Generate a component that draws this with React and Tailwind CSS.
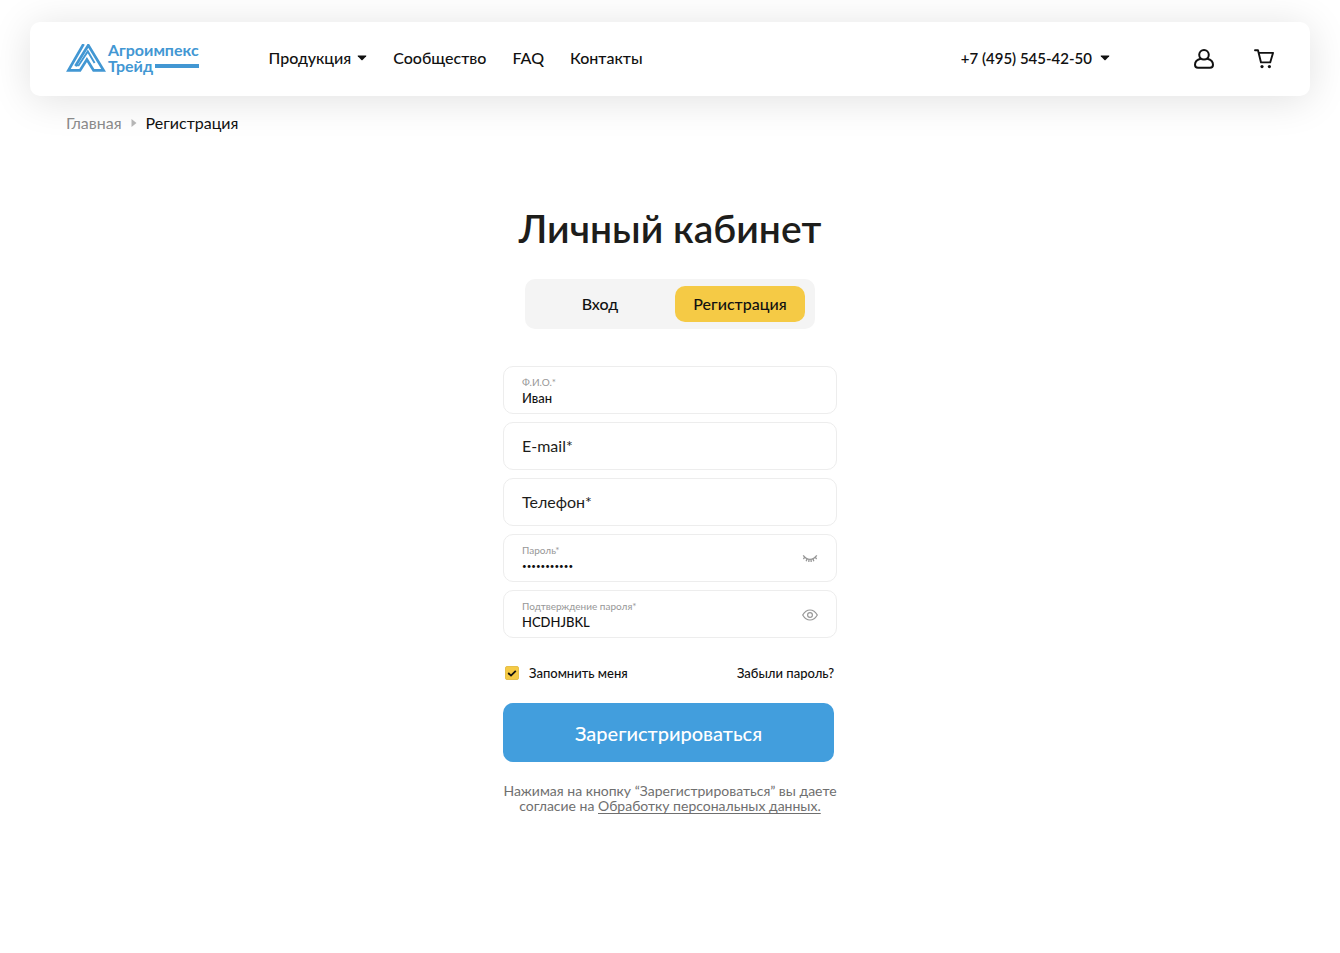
import React, { useState } from "react";

const fields = [
  { id: "name", label: "Ф.И.О.*", type: "text" },
  { id: "email", label: "E-mail*", type: "email" },
  { id: "phone", label: "Телефон*", type: "tel" },
  { id: "password", label: "Пароль*", type: "password" },
  { id: "confirm", label: "Подтверждение пароля*", type: "password" },
];

function Logo() {
  return (
    <a href="#" className="flex items-center gap-[2px] pb-[2px] text-[#4297d3]">
      <svg width="40" height="28" viewBox="0 0 40 28" fill="none" stroke="currentColor" strokeWidth="2.7">
        <path d="M17.6 0 L2.4 26.4 H14 L20.9 15.5 L27.6 26.4 H37.6 L22.3 1.2 L9.4 22" />
        <path d="M9.4 21.4 H12.6 L21.8 7.4 L28.6 19" strokeWidth="1.9" />
      </svg>
      <span className="flex flex-col text-[16px] leading-4 font-bold">
        <span>Агроимпекс</span>
        <span className="flex items-center gap-[2px]">
          Трейд
          <span className="h-1 flex-1 bg-[#4297d3]" />
        </span>
      </span>
    </a>
  );
}

function Caret() {
  return (
    <svg width="10" height="6" viewBox="0 0 10 6" fill="currentColor">
      <path d="M1 0.5 H9 Q9.6 0.7 9.2 1.2 L5.6 5 Q5 5.6 4.4 5 L0.8 1.2 Q0.4 0.7 1 0.5 Z" />
    </svg>
  );
}

function UserIcon() {
  return (
    <svg width="20" height="20" viewBox="0 0 20 20" fill="none" stroke="currentColor" strokeWidth="2">
      <circle cx="10" cy="5.8" r="4.8" />
      <path d="M6.8 9.8 C3.4 10.6 1 12.9 1 15.8 C1 17.8 2 18.8 4 18.8 H16 C18 18.8 19 17.8 19 15.8 C19 12.9 16.6 10.6 13.2 9.8" />
    </svg>
  );
}

function CartIcon() {
  return (
    <svg width="20" height="20" viewBox="0 0 20 20" fill="none" stroke="currentColor" strokeWidth="1.9">
      <path d="M1 1.2 H4 L7 13.4 H16.2 L19 3.9 H4.8" strokeLinejoin="round" strokeLinecap="round" />
      <circle cx="8" cy="17.6" r="1.6" fill="currentColor" stroke="none" />
      <circle cx="15.4" cy="17.6" r="1.6" fill="currentColor" stroke="none" />
    </svg>
  );
}

function EyeIcon({ open }) {
  if (open) {
    return (
      <svg width="16" height="12" viewBox="0 0 16 12" fill="none" stroke="currentColor" strokeWidth="1.2">
        <path d="M0.7 6 C2.6 2.7 5.1 1 8 1 C10.9 1 13.4 2.7 15.3 6 C13.4 9.3 10.9 11 8 11 C5.1 11 2.6 9.3 0.7 6 Z" />
        <circle cx="8" cy="6" r="2.4" />
      </svg>
    );
  }
  return (
    <svg width="16" height="12" viewBox="0 0 16 12" fill="none" stroke="currentColor" strokeWidth="1.3">
      <path d="M1.2 2.4 C3.2 5.2 5.4 6.3 8 6.3 C10.6 6.3 12.8 5.2 14.8 2.4" />
      <path d="M2.8 4.2 L1.4 6 M5 5.8 L4.2 8.2 M7 6.4 L6.8 9 M9 6.4 L9.2 9 M11 5.8 L11.8 8.2 M13.2 4.2 L14.6 6" />
    </svg>
  );
}

function Field({ field, value, visible, onChange, onToggle }) {
  const isPassword = field.type === "password";
  const masked = isPassword && !visible;
  return (
    <div className="relative flex h-12 items-center rounded-[10px] border border-[#ededed] px-[18px] pt-[3px]">
      <div className="flex min-w-0 flex-1 flex-col">
        <label
          htmlFor={field.id}
          className={
            value
              ? "text-[10px] leading-3 text-[#979797]"
              : "pointer-events-none absolute inset-y-0 flex items-center text-[16px] text-[#1d1d1b]"
          }
        >
          {field.label}
        </label>
        <input
          id={field.id}
          type={isPassword && visible ? "text" : field.type}
          value={value}
          onChange={(e) => onChange(field.id, e.target.value)}
          className={
            masked
              ? "h-5 w-full bg-transparent text-[8px] text-[#111111] outline-none"
              : "h-5 w-full bg-transparent text-[13px] font-medium text-[#111111] outline-none"
          }
        />
      </div>
      {isPassword && (
        <button
          type="button"
          aria-label={visible ? "Скрыть пароль" : "Показать пароль"}
          onClick={() => onToggle(field.id)}
          className="pb-[2px] text-[#979797]"
        >
          <EyeIcon open={visible} />
        </button>
      )}
    </div>
  );
}

function App() {
  const [tab, setTab] = useState("register");
  const [remember, setRemember] = useState(true);
  const [visible, setVisible] = useState({ password: false, confirm: true });
  const [values, setValues] = useState({
    name: "Иван",
    email: "",
    phone: "",
    password: "qwerty12345",
    confirm: "HCDHJBKL",
  });

  const handleChange = (id, value) => setValues({ ...values, [id]: value });
  const handleToggle = (id) => setVisible({ ...visible, [id]: !visible[id] });

  const tabClass = (name) =>
    name === tab
      ? "h-9 w-[130px] rounded-[10px] bg-[#f5ca45]"
      : "h-9 w-[130px] rounded-[10px]";

  return (
    <div className="min-h-screen bg-white px-[30px] pt-[22px] pb-10 font-['Lato','Noto_Sans',sans-serif] text-[#111111]">
      <header className="flex h-[74px] items-center rounded-[10px] bg-white px-9 shadow-[0_4px_40px_rgba(0,0,0,0.12)]">
        <Logo />
        <nav className="ml-[70px] flex items-center gap-[26px] pb-[2px] text-[16px] font-medium">
          <button type="button" className="flex items-center gap-[6px]">
            Продукция
            <Caret />
          </button>
          <a href="#">Сообщество</a>
          <a href="#">FAQ</a>
          <a href="#">Контакты</a>
        </nav>
        <button
          type="button"
          className="mr-[84px] ml-auto flex items-center gap-2 pb-[2px] text-[15px] font-semibold"
        >
          +7 (495) 545-42-50
          <Caret />
        </button>
        <div className="flex items-center gap-10">
          <a href="#" aria-label="Профиль">
            <UserIcon />
          </a>
          <a href="#" aria-label="Корзина">
            <CartIcon />
          </a>
        </div>
      </header>

      <div className="mt-[15px] flex items-center gap-[9px] px-9 text-[16px] leading-6">
        <a href="#" className="text-[#8a8a8a]">
          Главная
        </a>
        <svg width="6" height="8" viewBox="0 0 6 8" className="text-[#b5b5b5]" fill="currentColor">
          <path d="M0.5 0 L5.5 4 L0.5 8 Z" />
        </svg>
        <span>Регистрация</span>
      </div>

      <main className="mx-auto mt-[69px] flex max-w-[334px] flex-col items-center">
        <h1 className="text-[39px] leading-[48px] font-semibold whitespace-nowrap text-[#1d1d1b]">Личный кабинет</h1>

        <div className="mt-[27px] flex h-[50px] w-[290px] items-center justify-between rounded-[10px] bg-[#f4f4f4] px-[10px] text-[16px] font-medium">
          <button type="button" className={tabClass("login")} onClick={() => setTab("login")}>
            Вход
          </button>
          <button type="button" className={tabClass("register")} onClick={() => setTab("register")}>
            Регистрация
          </button>
        </div>

        <form className="mt-[37px] w-full" onSubmit={(e) => e.preventDefault()}>
          <div className="flex flex-col gap-2">
            {fields.map((field) => (
              <Field
                key={field.id}
                field={field}
                value={values[field.id]}
                visible={visible[field.id]}
                onChange={handleChange}
                onToggle={handleToggle}
              />
            ))}
          </div>

          <div className="mt-[25px] flex items-center justify-between pr-[3px] pl-[2px] text-[13px] leading-5 font-medium">
            <label className="flex items-center gap-[10px]">
              <span className="relative flex">
                <input
                  type="checkbox"
                  checked={remember}
                  onChange={(e) => setRemember(e.target.checked)}
                  className="peer size-[14px] appearance-none rounded-[2px] border border-[#e6c04a] checked:bg-[#f5ca45]"
                />
                <svg
                  width="14"
                  height="14"
                  viewBox="0 0 14 14"
                  className="pointer-events-none absolute hidden peer-checked:block"
                  fill="none"
                  stroke="#111111"
                  strokeWidth="1.8"
                >
                  <path d="M3.2 7 L6 9.6 L10.8 4.8" />
                </svg>
              </span>
              Запомнить меня
            </label>
            <a href="#">Забыли пароль?</a>
          </div>

          <div className="pr-[3px]">
            <button
              type="submit"
              className="mt-5 h-[59px] w-full rounded-[10px] bg-[#429edd] text-[20px] font-medium text-white"
            >
              Зарегистрироваться
            </button>
          </div>
          <p className="mt-[21px] text-center text-[14px] leading-[15px] whitespace-nowrap text-[#6f6f6f]">
            Нажимая на кнопку “Зарегистрироваться” вы даете
            <br />
            согласие на{" "}
            <a href="#" className="underline underline-offset-2">
              Обработку персональных данных.
            </a>
          </p>
        </form>
      </main>
    </div>
  );
}

export default App;
